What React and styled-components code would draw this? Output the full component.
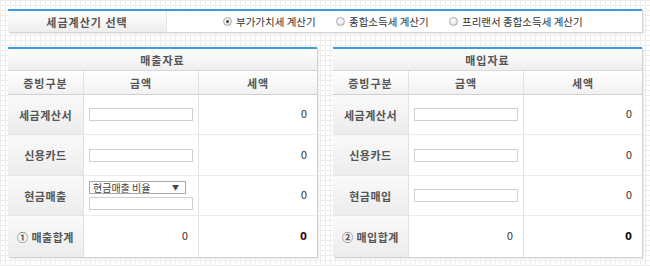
import React, { useState } from 'react';
import styled, { createGlobalStyle } from 'styled-components';

const GlobalStyle = createGlobalStyle`
  *, *::before, *::after {
    box-sizing: border-box;
  }
  html, body {
    margin: 0;
    padding: 0;
  }
  body {
    font-family: "Noto Sans CJK KR", "Noto Sans", sans-serif;
    font-size: 11px;
    color: #333;
    background-color: #fff;
    background-image:
      linear-gradient(to right, #ededed 1px, transparent 1px),
      linear-gradient(to bottom, #ededed 1px, transparent 1px);
    background-size: 5px 5px;
    min-height: 266px;
  }
`;

const Page = styled.div`
  padding: 9px 8px 0 8px;
  width: 650px;
`;

const TopBar = styled.div`
  display: flex;
  height: 23px;
  width: 634px;
  border-top: 2px solid #3d9be0;
  background: #fff;
  box-shadow: 1px 1px 0 #d4d4d4, 2px 2px 0 #ececec;
`;

const TopLabel = styled.div`
  width: 159px;
  display: flex;
  align-items: center;
  justify-content: center;
  font-weight: bold;
  font-size: 11px;
  color: #555;
  letter-spacing: 1px;
  background: linear-gradient(#ffffff, #ededed);
  border-right: 1px solid #e6e6e6;
`;

const RadioGroup = styled.div`
  display: flex;
  align-items: center;
  padding-left: 56px;
`;

const RadioItem = styled.label`
  display: flex;
  align-items: center;
  gap: 4px;
  width: ${(p) => p.w}px;
  font-size: 10.5px;
  color: #333;
  cursor: pointer;
  white-space: nowrap;
`;

const RadioDot = styled.span`
  width: 9px;
  height: 9px;
  border-radius: 50%;
  border: 1px solid #aaa;
  background: radial-gradient(circle at 40% 35%, #fff, #d6d6d6);
  display: inline-flex;
  align-items: center;
  justify-content: center;
  &::after {
    content: '';
    width: 3px;
    height: 3px;
    border-radius: 50%;
    background: ${(p) => (p.checked ? '#444' : 'transparent')};
  }
`;

const Panels = styled.div`
  display: flex;
  gap: 16px;
  margin-top: 15px;
`;

const Panel = styled.div`
  width: 309px;
  border-top: 2px solid #3d9be0;
  background: #fff;
  box-shadow: 1px 1px 0 #d4d4d4, 2px 2px 0 #ececec;
  display: grid;
  grid-template-columns: 76px 115px 1fr;
`;

const PanelTitle = styled.div`
  grid-column: 1 / 4;
  height: 22px;
  display: flex;
  align-items: center;
  justify-content: center;
  font-weight: bold;
  color: #555;
  letter-spacing: 1px;
  background: linear-gradient(#ffffff, #eeeeee);
  border-bottom: 1px solid #d8d8d8;
`;

const HeadCell = styled.div`
  height: 24px;
  display: flex;
  align-items: center;
  justify-content: center;
  font-weight: bold;
  color: #555;
  letter-spacing: 1px;
  background: linear-gradient(#ffffff, #f1f1f1);
  border-bottom: 1px solid #d0d0d0;
  border-right: ${(p) => (p.last ? 'none' : '1px solid #e2e2e2')};
`;

const LabelCell = styled.div`
  height: ${(p) => p.h}px;
  display: flex;
  align-items: center;
  justify-content: center;
  font-weight: bold;
  color: #555;
  letter-spacing: 0.5px;
  background: linear-gradient(#fafafa, #ececec);
  border-bottom: ${(p) => (p.last ? 'none' : '1px solid #e4e4e4')};
  border-right: 1px solid #e2e2e2;
`;

const InputCell = styled.div`
  height: ${(p) => p.h}px;
  display: flex;
  flex-direction: column;
  justify-content: center;
  align-items: ${(p) => (p.right ? 'flex-end' : 'flex-start')};
  gap: 3px;
  padding: 0 10px 0 5px;
  border-bottom: ${(p) => (p.last ? 'none' : '1px solid #ececec')};
  border-right: 1px solid #e2e2e2;
`;

const ValueCell = styled.div`
  height: ${(p) => p.h}px;
  display: flex;
  align-items: center;
  justify-content: flex-end;
  padding-right: 10px;
  font-family: "DejaVu Sans", sans-serif;
  font-size: 10px;
  font-weight: ${(p) => (p.bold ? 'bold' : 'normal')};
  color: ${(p) => p.color || '#333'};
  border-bottom: ${(p) => (p.last ? 'none' : '1px solid #ececec')};
`;

const Num = styled.span`
  font-family: "DejaVu Sans", sans-serif;
  font-size: 10px;
  color: #333;
`;

const TextBox = styled.input`
  width: 104px;
  height: 13px;
  border: 1px solid #cfcfcf;
  background: #fff;
  padding: 0 2px;
  margin: 0;
  font-size: 10px;
  outline: none;
`;

const SelectBox = styled.div`
  width: 97px;
  height: 13px;
  border: 1px solid #aaa;
  background: #fff;
  display: flex;
  align-items: center;
  justify-content: space-between;
  padding: 0 6px 0 3px;
  font-size: 10px;
  color: #444;
  line-height: 1;
  span {
    font-size: 7px;
    color: #444;
  }
`;

const rowHeights = [40, 41, 40, 41];

const DataPanel = ({ title, rows, totalLabel, totalColor }) => (
  <Panel>
    <PanelTitle>{title}</PanelTitle>
    <HeadCell>증빙구분</HeadCell>
    <HeadCell>금액</HeadCell>
    <HeadCell last>세액</HeadCell>
    {rows.map((row, i) => (
      <React.Fragment key={row.label}>
        <LabelCell h={rowHeights[i]}>{row.label}</LabelCell>
        <InputCell h={rowHeights[i]}>
          {row.select && (
            <SelectBox>
              현금매출 비율<span>▼</span>
            </SelectBox>
          )}
          <TextBox type="text" />
        </InputCell>
        <ValueCell h={rowHeights[i]}>0</ValueCell>
      </React.Fragment>
    ))}
    <LabelCell h={rowHeights[3]} last>{totalLabel}</LabelCell>
    <InputCell h={rowHeights[3]} right last>
      <Num>0</Num>
    </InputCell>
    <ValueCell h={rowHeights[3]} last bold color={totalColor}>0</ValueCell>
  </Panel>
);

const options = [
  { label: '부가가치세 계산기', w: 113 },
  { label: '종합소득세 계산기', w: 113 },
  { label: '프리랜서 종합소득세 계산기', w: 140 },
];

const App = () => {
  const [selected, setSelected] = useState(0);

  return (
    <Page>
      <GlobalStyle />
      <TopBar>
        <TopLabel>세금계산기 선택</TopLabel>
        <RadioGroup>
          {options.map((o, i) => (
            <RadioItem key={o.label} w={o.w} onClick={() => setSelected(i)}>
              <RadioDot checked={selected === i} />
              {o.label}
            </RadioItem>
          ))}
        </RadioGroup>
      </TopBar>
      <Panels>
        <DataPanel
          title="매출자료"
          rows={[
            { label: '세금계산서' },
            { label: '신용카드' },
            { label: '현금매출', select: true },
          ]}
          totalLabel="① 매출합계"
          totalColor="#3a0a0a"
        />
        <DataPanel
          title="매입자료"
          rows={[
            { label: '세금계산서' },
            { label: '신용카드' },
            { label: '현금매입' },
          ]}
          totalLabel="② 매입합계"
          totalColor="#111"
        />
      </Panels>
    </Page>
  );
};

export default App;
